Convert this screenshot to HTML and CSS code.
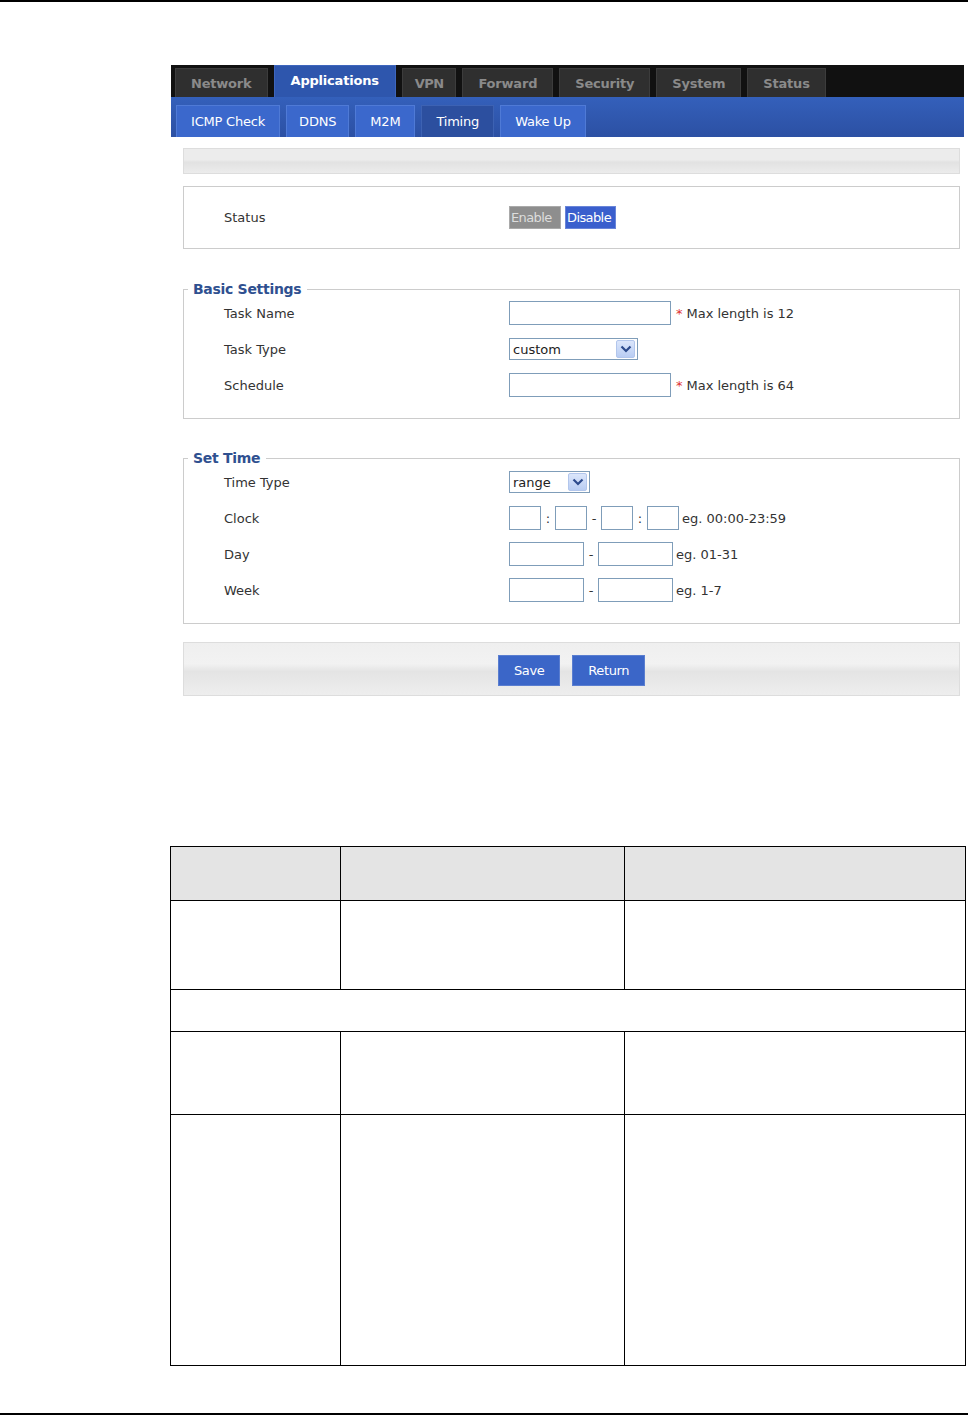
FILE: index.html
```html
<!DOCTYPE html>
<html lang="en">
<head>
<meta charset="UTF-8">
<link rel="stylesheet" href="styles.css">
<title>Timing</title>
</head>
<body>
<div class="page-rule"></div>
<div class="shot">
  <div class="topnav">
    <div class="tab">Network</div>
    <div class="tab active">Applications</div>
    <div class="tab short">VPN</div>
    <div class="tab">Forward</div>
    <div class="tab">Security</div>
    <div class="tab">System</div>
    <div class="tab">Status</div>
  </div>
  <div class="subnav">
    <div class="subtab">ICMP Check</div>
    <div class="subtab short">DDNS</div>
    <div class="subtab">M2M</div>
    <div class="subtab current">Timing</div>
    <div class="subtab">Wake Up</div>
  </div>
  <div class="content">
    <div class="graybar"></div>
    <div class="statusbox">
      <div class="label">Status</div>
      <div class="toggle">
        <span class="btn-off">Enable</span>
        <span class="btn-on">Disable</span>
      </div>
    </div>

    <fieldset class="group">
      <legend>Basic Settings</legend>
      <div class="row">
        <div class="label">Task Name</div>
        <div class="value"><span class="input long"></span><span class="star">*</span><span class="note">Max length is 12</span></div>
      </div>
      <div class="row">
        <div class="label">Task Type</div>
        <div class="value">
          <span class="select wide">custom<span class="arrow"><svg width="12" height="8" viewBox="0 0 12 8"><path d="M1.5 1.5 L6 6 L10.5 1.5" fill="none" stroke="#2c4a8c" stroke-width="2.2"/></svg></span></span>
        </div>
      </div>
      <div class="row">
        <div class="label">Schedule</div>
        <div class="value"><span class="input long"></span><span class="star">*</span><span class="note">Max length is 64</span></div>
      </div>
    </fieldset>

    <fieldset class="group">
      <legend>Set Time</legend>
      <div class="row">
        <div class="label">Time Type</div>
        <div class="value">
          <span class="select narrow">range<span class="arrow"><svg width="12" height="8" viewBox="0 0 12 8"><path d="M1.5 1.5 L6 6 L10.5 1.5" fill="none" stroke="#2c4a8c" stroke-width="2.2"/></svg></span></span>
        </div>
      </div>
      <div class="row">
        <div class="label">Clock</div>
        <div class="value">
          <span class="input tiny"></span><span class="sep">:</span><span class="input tiny"></span><span class="sep">-</span><span class="input tiny"></span><span class="sep">:</span><span class="input tiny"></span><span class="hint">eg. 00:00-23:59</span>
        </div>
      </div>
      <div class="row">
        <div class="label">Day</div>
        <div class="value">
          <span class="input mid"></span><span class="sep">-</span><span class="input mid"></span><span class="hint">eg. 01-31</span>
        </div>
      </div>
      <div class="row">
        <div class="label">Week</div>
        <div class="value">
          <span class="input mid"></span><span class="sep">-</span><span class="input mid"></span><span class="hint">eg. 1-7</span>
        </div>
      </div>
    </fieldset>

    <div class="actions">
      <span class="action">Save</span>
      <span class="action">Return</span>
    </div>
  </div>
</div>

<table class="params">
  <tr class="head"><td class="c1"></td><td class="c2"></td><td></td></tr>
  <tr class="r1"><td></td><td></td><td></td></tr>
  <tr class="r2"><td colspan="3"></td></tr>
  <tr class="r3"><td></td><td></td><td></td></tr>
  <tr class="r4"><td></td><td></td><td></td></tr>
</table>

<div class="page-foot"></div>
</body>
</html>
```
FILE: styles.css
```css
body {
  margin: 0;
  font-family: "DejaVu Sans", Verdana, sans-serif;
  font-size: 12px;
  color: #333;
  width: 968px;
  height: 1416px;
  position: relative;
}
.page-rule {
  border-top: 2px solid #000;
}
.shot {
  margin: 63px 0 0 171px;
  width: 793px;
}
.topnav {
  background: #111;
  height: 32px;
  display: flex;
  align-items: flex-end;
  gap: 6px;
  padding-left: 4px;
}
.tab {
  height: 28px;
  line-height: 30px;
  padding: 0 15px;
  background: #2f2f2f;
  border: 1px solid #3c3c3c;
  border-bottom: none;
  color: #8a8a8a;
  font-weight: bold;
  font-size: 13px;
  letter-spacing: -0.2px;
}
.tab.short {
  padding: 0 12px;
  letter-spacing: -0.6px;
}
.tab.active {
  background: #2e56ad;
  border-color: #3e66bd;
  color: #fff;
  height: 31px;
  line-height: 30px;
  padding: 0 16px;
}
.subnav {
  background: linear-gradient(#3460bb, #2c50a3);
  height: 40px;
  display: flex;
  align-items: flex-end;
  gap: 6px;
  padding-left: 5px;
}
.subtab {
  height: 31px;
  line-height: 31px;
  padding: 0 14px;
  background: #3b68cc;
  border: 1px solid #4f7ad6;
  border-bottom: none;
  color: #fff;
  font-size: 13px;
  letter-spacing: -0.2px;
}
.subtab.short {
  padding: 0 12px;
}
.subtab.current {
  background: #2c4f9f;
  border-color: #3d62b3;
}
.content {
  padding: 11px 4px 4px 12px;
}
.graybar {
  height: 24px;
  border: 1px solid #ddd;
  background: linear-gradient(#ececec 45%, #e2e2e2 55%, #ececec);
}
.statusbox {
  margin-top: 12px;
  height: 61px;
  border: 1px solid #ccc;
  display: flex;
  align-items: center;
}
.label {
  width: 285px;
  padding-left: 40px;
  font-size: 13px;
  color: #333;
}
.toggle {
  display: flex;
  gap: 4px;
  font-size: 13px;
  letter-spacing: -0.6px;
}
.btn-off {
  background: #8e8e8e;
  color: #ddd;
  padding: 3px 1px;
  width: 48px;
  border: 1px solid #aaa;
}
.btn-on {
  background: #3a5fcd;
  color: #fff;
  padding: 3px 1px;
  width: 47px;
  border: 1px solid #6985d8;
}
.group {
  margin: 38px 0 0;
  border: 1px solid #ccc;
  padding: 4px 0 15px;
}
.group + .group {
  margin-top: 37px;
}
.group legend {
  margin-left: 4px;
  padding: 0 6px 0 5px;
  font-weight: bold;
  font-size: 14px;
  color: #2f5090;
  letter-spacing: -0.3px;
  line-height: 4px;
}
.row {
  display: flex;
  align-items: center;
  height: 36px;
}
.value {
  display: flex;
  align-items: center;
  font-size: 13px;
  color: #333;
}
.input {
  display: inline-block;
  height: 22px;
  border: 1px solid #7f9db9;
  background: #fff;
}
.input.long { width: 160px; }
.input.tiny { width: 30px; }
.input.mid { width: 73px; }
.star {
  color: #e03030;
  margin-left: 5px;
}
.note {
  margin-left: 4px;
}
.sep {
  width: 14px;
  text-align: center;
}
.hint {
  margin-left: 3px;
}
.select {
  display: flex;
  align-items: center;
  justify-content: space-between;
  height: 20px;
  border: 1px solid #7f9db9;
  padding: 0 2px 0 3px;
  font-size: 13px;
  color: #222;
}
.select.wide { width: 122px; }
.select.narrow { width: 74px; }
.arrow {
  width: 17px;
  height: 16px;
  background: linear-gradient(#dbe6fb, #b9cdf3);
  border: 1px solid #b2c6ec;
  display: flex;
  align-items: center;
  justify-content: center;
  border-radius: 2px;
}
.actions {
  margin-top: 18px;
  height: 54px;
  border: 1px solid #ddd;
  background: linear-gradient(#efefef, #f2f2f2 40%, #e4e4e4 55%, #eeeeee);
  display: flex;
  justify-content: center;
  align-items: center;
  gap: 12px;
  box-sizing: border-box;
}
.action {
  background: #3b66c8;
  color: #fff;
  border: 1px solid #5a7ed0;
  height: 29px;
  line-height: 29px;
  padding: 0 15px;
  font-size: 13px;
  letter-spacing: -0.4px;
  margin-top: 2px;
}
.params {
  margin: 146px 0 0 170px;
  width: 796px;
  border-collapse: collapse;
}
.params td {
  border: 1.5px solid #000;
  padding: 0;
}
.params .c1 { width: 169px; }
.params .c2 { width: 283px; }
.params .head td { height: 53px; background: #e4e4e4; }
.params .r1 td { height: 88px; }
.params .r2 td { height: 41px; }
.params .r3 td { height: 82px; }
.params .r4 td { height: 250px; }
.page-foot {
  position: absolute;
  left: 0;
  right: 0;
  top: 1413px;
  border-top: 2px solid #000;
}
```
